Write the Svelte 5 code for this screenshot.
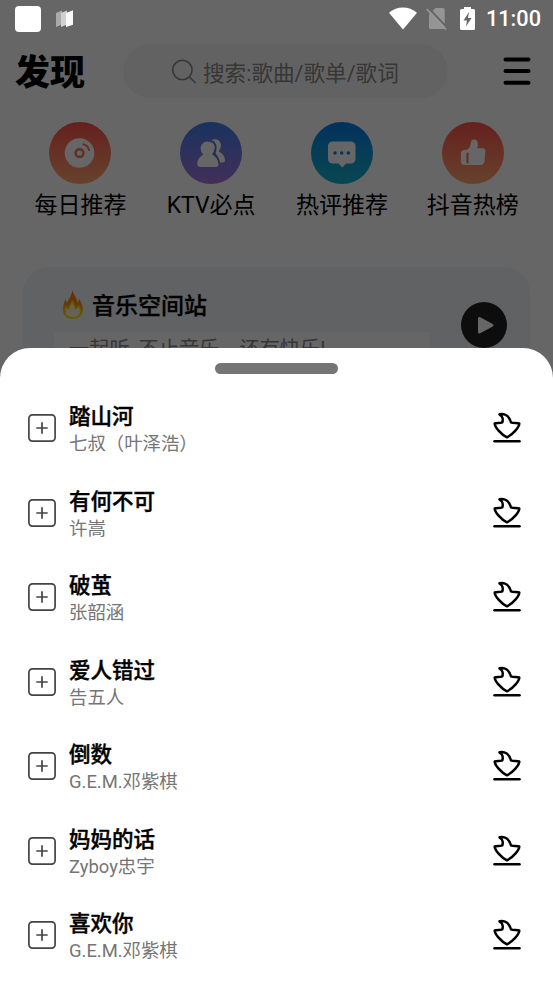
<script lang="ts">
	const shortcuts = [
		{ label: "每日推荐", icon: "disc" },
		{ label: "KTV必点", icon: "people" },
		{ label: "热评推荐", icon: "chat" },
		{ label: "抖音热榜", icon: "thumb" },
	];
	const songs = [
		{ title: "踏山河", artist: "七叔（叶泽浩）" },
		{ title: "有何不可", artist: "许嵩" },
		{ title: "破茧", artist: "张韶涵" },
		{ title: "爱人错过", artist: "告五人" },
		{ title: "倒数", artist: "G.E.M.邓紫棋" },
		{ title: "妈妈的话", artist: "Zyboy忠宇" },
		{ title: "喜欢你", artist: "G.E.M.邓紫棋" },
	];
</script>

<div class="screen">
	<div class="page">
		<header>
			<h1>发现</h1>
			<div class="search">
				<svg width="26" height="26" viewBox="0 0 26 26" fill="none" stroke="#888" stroke-width="1.6">
					<circle cx="11.4" cy="12" r="9.7" />
					<path d="M18.2 19l6 5.5" stroke-linecap="round" />
				</svg>
				<span>搜索:歌曲/歌单/歌词</span>
			</div>
			<svg class="menu" width="28" height="28" viewBox="0 0 28 28" stroke="#000" stroke-width="4" stroke-linecap="round">
				<path d="M2.5 2.5h23M2.5 14h23M2.5 25.7h23" />
			</svg>
		</header>

		<nav>
			{#each shortcuts as item}
				<div class="shortcut">
					<div class="circle {item.icon}">
						<svg width="62" height="62" viewBox="0 0 62 62" fill="#fff">
							{#if item.icon === "disc"}
								<circle cx="30.5" cy="31" r="14.8" />
								<g fill="none" stroke="#f37a5c" stroke-width="2" stroke-linecap="round">
									<circle cx="30.5" cy="31" r="3.9" stroke-width="2.6" />
									<path d="M34.5 22.200c2.800.8 4.800 2.900 5.500 5.900" />
								</g>
							{:else if item.icon === "people"}
								<path d="M31.500 18.500c2-1.700 6-1.500 8 .7 2.600 3 1.400 7.200-.8 10.200 3.500 1.600 6.500 5 6.300 9.200 0 1.300-1 2-2.200 2H39z" />
								<path
									d="M27.500 19.600c4 0 6.900 3.200 6.900 7 0 2.500-.9 4.400-2.100 6.300 3.600 1.300 6.200 5 6.200 9.200 0 1.800-1 3-2.800 3H20.300c-1.900 0-3-1.200-3-3 0-4.500 2.500-7.900 6.100-9.200-1.700-1.900-2.700-3.800-2.700-6.300 0-3.800 2.900-7 6.800-7z"
								/>
								<path d="M32.500 18.800c3.800 3.800 4.200 8.500 1.200 13 3.300 2 5 5.200 5.600 9.800" fill="none" stroke="#5c72d8" stroke-width="1.700" />
							{:else if item.icon === "chat"}
								<path d="M21.500 19.500h18.500a4.500 4.500 0 0 1 4.500 4.500v13a4.500 4.500 0 0 1-4.500 4.500h-4.800L31.300 45.500l-3.800-4h-6a4.500 4.500 0 0 1-4.500-4.500V24a4.500 4.500 0 0 1 4.500-4.500z" />
								<g fill="#1487c8">
									<circle cx="24" cy="31" r="1.800" />
									<circle cx="30.700" cy="31" r="1.800" />
									<circle cx="37.300" cy="31" r="1.800" />
								</g>
							{:else}
								<path
									d="M22.500 28h1.500c2.500-.6 4.200-2.500 4.700-6.500.2-2.700 1.300-3.900 3.300-3.900 3 0 4.300 2.500 3.800 5.500l-.5 3.200h5.500c1.800 0 2.800 1.200 2.600 3l-1 10.300c-.3 2.300-1.500 3.500-3.700 3.500H22.500c-2.500 0-3.600-1.300-3.600-3.500V31.500c0-2.300 1.300-3.500 3.600-3.500z"
								/>
								<path d="M25.500 31.500V40.500" stroke="#f07a5e" stroke-width="2.200" stroke-linecap="round" />
							{/if}
						</svg>
					</div>
					<span>{item.label}</span>
				</div>
			{/each}
		</nav>

		<section class="station">
			<div class="station-text">
				<h2>
					<svg width="22" height="31" viewBox="0 0 22 31">
						<defs>
							<linearGradient id="flame" x1="0" y1="0" x2="0" y2="1">
								<stop offset="0" stop-color="#ff6a10" />
								<stop offset=".5" stop-color="#ff9410" />
								<stop offset="1" stop-color="#ffe600" />
							</linearGradient>
						</defs>
						<path
							d="M10.500 1c.5 5 4.700 7.400 4.700 12.500 1.200-.7 1.700-2 1.900-3.500 2.500 3.400 3.700 7 3.700 10.500 0 5.800-4 9.500-10 9.500S1 26.500 1 20.500c0-3.800 1-6.900 2.500-10 .6 1.200 1 2.300 1.200 3.500C7.500 9.700 9.700 6 10.500 1z"
							fill="url(#flame)"
						/>
						<path
							d="M10.300 11.500c.6 3.500 2.700 5 3 8.500 1.500-.5 2.500-1.500 3.200-3 1.700 2.300 2.300 4 2.100 6.200-.3 3.600-3.500 5.400-7.900 5.400s-7.600-2-7.600-6c0-2 .3-3.700 1-5.300.6 1.200 1.500 2.100 2.700 2.700.1-3.700 2.900-5 3.500-8.500z"
							fill="#fff5dc"
							stroke="#ffd800"
							stroke-width="1.300"
						/>
					</svg>
					音乐空间站
				</h2>
				<p>一起听&nbsp;,不止音乐，还有快乐!</p>
			</div>
			<svg class="play" width="46" height="46" viewBox="0 0 46 46">
				<circle cx="23" cy="23" r="23" fill="#222" />
				<path d="M18.500 16.500v13.500l12.500-6.700z" fill="#fff" stroke="#fff" stroke-width="3" stroke-linejoin="round" />
			</svg>
		</section>
	</div>

	<div class="scrim"></div>

	<div class="status">
		<div class="app-square"></div>
		<svg width="18" height="18" viewBox="0 0 18 18">
			<path d="M0 3l6-2.500v14L0 17z" fill="#aaa" />
			<path d="M5 3l6-2.500v14L5 17z" fill="#d0d0d0" />
			<path d="M10 3l7-2.800v14.500L10 17z" fill="#f8f8f8" />
		</svg>
		<div class="status-right">
			<svg width="28" height="23" viewBox="0 0 28 23" fill="#fff">
				<path d="M0 5.800C8-1.200 20-1.200 28 5.800L14 22.500z" />
			</svg>
			<svg class="sim" width="22" height="23" viewBox="0 0 22 23">
				<path d="M3 7.500L9.500 1H17q1.700 0 1.700 1.700V20.500q0 1.500-1.700 1.500H4.500Q3 22 3 20.500z" fill="#959595" />
				<path d="M2 0.500l19.500 20.500" stroke="#666" stroke-width="2" />
				<path d="M.7 2l19.500 20.500" stroke="#999" stroke-width="1.800" />
			</svg>
			<svg class="battery" width="15" height="23" viewBox="0 0 15 23">
				<path d="M4 0h7v2h2.500Q15 2 15 3.500v18q0 1.500-1.500 1.500h-12Q0 23 0 21.500v-18Q0 2 1.500 2H4z" fill="#fff" />
				<path d="M9 5L3.500 13.500H7L6 19.500l5.500-8.500H8z" fill="#666" />
			</svg>
			<span>11:00</span>
		</div>
	</div>

	<div class="sheet">
		<div class="handle"></div>
		<ul>
			{#each songs as song}
				<li>
					<svg class="add" width="28" height="28" viewBox="0 0 28 28" fill="none" stroke="#444" stroke-width="1.700">
						<rect x=".9" y=".9" width="26.200" height="26.200" rx="3.500" />
						<path d="M14 8.300v11.400M8.300 14h11.400" />
					</svg>
					<div class="song">
						<strong>{song.title}</strong>
						<span>{song.artist}</span>
					</div>
					<svg class="download" width="28" height="32" viewBox="0 0 28 32" fill="none" stroke="#000" stroke-width="2.500" stroke-linejoin="round" stroke-linecap="round">
						<path d="M6.500 2.300C12 1 16.200 4.200 18 10.300c2 1 5.500.5 8.300 1.200C26.300 15 20 22.500 14 25.300 8 22.500 1.700 15 1.700 11.500c2.500-.7 5.300-.2 7.600-1.200C10.300 7.500 9.500 4 6.500 2.300z" />
						<path d="M1.500 29.200h25" />
					</svg>
				</li>
			{/each}
		</ul>
	</div>
</div>

<style>
	.screen {
		position: relative;
		width: 553px;
		height: 983px;
		overflow: hidden;
		background: #fff;
		font-family: Roboto, "Noto Sans CJK SC", sans-serif;
		color: #000;
	}
	svg {
		display: block;
		flex: none;
	}
	h1,
	h2,
	p,
	ul {
		margin: 0;
		padding: 0;
	}
	.page {
		padding-top: 44px;
	}
	header {
		display: flex;
		align-items: center;
		height: 54px;
		padding: 0 22px 0 15px;
	}
	h1 {
		width: 108px;
		padding-top: 6px;
		font-size: 35px;
		line-height: 54px;
		font-weight: 900;
	}
	.search {
		display: flex;
		align-items: center;
		gap: 6px;
		box-sizing: border-box;
		width: 325px;
		height: 54px;
		padding-left: 48px;
		border-radius: 27px;
		background: #f6f6f6;
		color: #888;
		font-size: 21.6px;
		white-space: nowrap;
	}
	.menu {
		margin-left: auto;
	}
	nav {
		display: flex;
		padding: 24px 15px 0;
	}
	.shortcut {
		display: flex;
		flex: 1;
		flex-direction: column;
		align-items: center;
		font-size: 23px;
		line-height: 40px;
	}
	.shortcut span {
		height: 38px;
		padding-top: 2px;
	}
	.circle {
		width: 62px;
		height: 62px;
		border-radius: 50%;
	}
	.circle.disc,
	.circle.thumb {
		background: linear-gradient(#ff514d, #ffa66f);
	}
	.circle.people {
		background: linear-gradient(#3f80ea, #a875dc);
	}
	.circle.chat {
		background: linear-gradient(#087dea, #14b3c9);
	}
	.station {
		display: flex;
		align-items: flex-start;
		justify-content: space-between;
		box-sizing: border-box;
		height: 140px;
		margin: 43px 23px 0;
		padding: 20px 23px 0 31px;
		border-radius: 26px;
		background: #f1f4f8;
	}
	h2 {
		display: flex;
		align-items: center;
		gap: 8px;
		height: 34px;
		padding-left: 8px;
		font-size: 23px;
		font-weight: 500;
		-webkit-text-stroke: 0.3px #000;
	}
	p {
		box-sizing: border-box;
		width: 376px;
		margin-top: 11px;
		padding: 3px 0 0 15px;
		background: #fff;
		color: #888;
		font-size: 20.2px;
		line-height: 29px;
	}
	.play {
		margin-top: 15px;
	}
	.scrim {
		position: absolute;
		inset: 0;
		background: rgba(0, 0, 0, 0.6);
	}
	.status {
		position: absolute;
		top: 0;
		left: 0;
		right: 0;
		display: flex;
		align-items: center;
		gap: 15px;
		height: 37px;
		padding: 0 12px 0 15px;
		color: #fff;
	}
	.app-square {
		width: 26px;
		height: 26px;
		border-radius: 4px;
		background: #fff;
	}
	.status-right {
		display: flex;
		align-items: center;
		margin-left: auto;
		font-size: 21.7px;
		font-weight: 500;
	}
	.sim {
		margin-left: 9px;
	}
	.battery {
		margin: 0 11px 0 12px;
	}
	.sheet {
		position: absolute;
		top: 348px;
		left: 0;
		right: 0;
		bottom: 0;
		overflow: hidden;
		border-radius: 30px 30px 0 0;
		background: #fff;
	}
	.handle {
		width: 123px;
		height: 11px;
		margin: 15px auto 0;
		border-radius: 6px;
		background: #757575;
	}
	ul {
		margin-top: 12px;
		list-style: none;
	}
	li {
		display: flex;
		align-items: center;
		height: 84.5px;
		padding: 0 32px 0 28px;
	}
	.song {
		display: flex;
		flex: 1;
		flex-direction: column;
		margin-left: 13px;
		padding-top: 4px;
	}
	.song strong {
		font-size: 21.5px;
		font-weight: 500;
		line-height: 28px;
		-webkit-text-stroke: 0.4px #000;
	}
	.song span {
		color: #757575;
		font-size: 18.4px;
		line-height: 26px;
	}
</style>
